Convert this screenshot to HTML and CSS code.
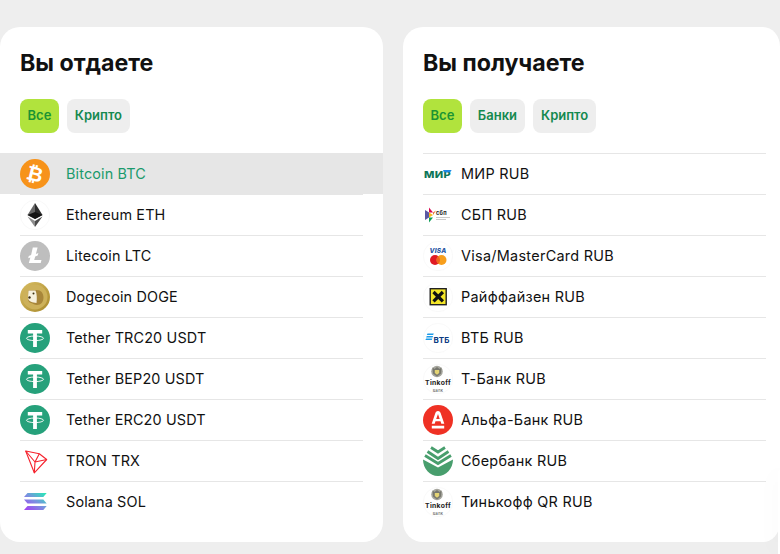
FILE: index.html
```html
<!DOCTYPE html>
<html lang="ru">
<head>
<meta charset="utf-8">
<title>Обмен</title>
<link rel="stylesheet" href="styles.css">
</head>
<body>
<main class="page">
  <section class="card">
    <h2 class="title">Вы отдаете</h2>
    <div class="tabs">
      <span class="tab tab-active">Все</span>
      <span class="tab">Крипто</span>
    </div>
    <ul class="list">
      <li class="row row-active">
        <svg class="icon" viewBox="0 0 30 30"><circle cx="15" cy="15" r="15" fill="#f7931a"/><text x="15" y="22" class="btc" transform="rotate(14 15 15)">₿</text></svg>
        <span class="name">Bitcoin BTC</span>
      </li>
      <li class="row">
        <svg class="icon" viewBox="0 0 30 30"><circle cx="15" cy="15" r="14.7" fill="#fff" stroke="#f4f4f4" stroke-width=".6"/><path d="M15 3l-7.500 12 7.500 4z" fill="#666"/><path d="M15 3l7.500 12-7.500 4z" fill="#2b2b2b"/><path d="M7.500 15l7.500-3 7.500 3-7.500 4z" fill="#141414"/><path d="M7.500 16.500L15 27v-6z" fill="#8d8d8d"/><path d="M22.500 16.500L15 27v-6z" fill="#4a4a4a"/></svg>
        <span class="name">Ethereum ETH</span>
      </li>
      <li class="row">
        <svg class="icon" viewBox="0 0 30 30"><circle cx="15" cy="15" r="15" fill="#bebebe"/><path d="M12.800 6.500h4.800l-1.700 6.400 2.500-1-.7 2.500-2.500 1-1 3.500h7.300l-.8 3.100H8.800l1.600-5.600-2.200.9.600-2.300 2.300-.9z" fill="#fff"/></svg>
        <span class="name">Litecoin LTC</span>
      </li>
      <li class="row">
        <svg class="icon" viewBox="0 0 30 30"><defs><linearGradient id="doge" x1="0" y1="0" x2="1" y2="1"><stop offset="0" stop-color="#d8bd62"/><stop offset="1" stop-color="#a98a2c"/></linearGradient></defs><circle cx="15" cy="15" r="15" fill="url(#doge)"/><circle cx="15" cy="15" r="12.500" fill="#cdb15a"/><path d="M8.500 8h8c4.500 0 7 3 7 7.500S21 23 17 23c-2.500 0-4-1.500-6-2-2-.6-3-2-3-4.500z" fill="#a8863a"/><path d="M8.500 8.500h7c1.500 3 1.500 8.500 1 12.500-2-.3-4-.5-5.500-1.200C9 19 8 17.500 8 15.500z" fill="#f7f1de"/><circle cx="13.500" cy="11.500" r="1" fill="#3c2f10"/><circle cx="9.500" cy="15.500" r="1.200" fill="#3c2f10"/></svg>
        <span class="name">Dogecoin DOGE</span>
      </li>
      <li class="row">
        <svg class="icon" viewBox="0 0 30 30"><use href="#usdt"/></svg>
        <span class="name">Tether TRC20 USDT</span>
      </li>
      <li class="row">
        <svg class="icon" viewBox="0 0 30 30"><use href="#usdt"/></svg>
        <span class="name">Tether BEP20 USDT</span>
      </li>
      <li class="row">
        <svg class="icon" viewBox="0 0 30 30"><use href="#usdt"/></svg>
        <span class="name">Tether ERC20 USDT</span>
      </li>
      <li class="row">
        <svg class="icon" viewBox="0 0 30 30"><g fill="none" stroke="#f5222d" stroke-width="1.100" stroke-linejoin="round"><path d="M5.700 5l13.600 2.700 7.400 5.800-12.400 13.300z"/><path d="M5.700 5l9.300 11-.7 10.800M15 16l11.700-2.500M15 16l4.300-8.300"/></g></svg>
        <span class="name">TRON TRX</span>
      </li>
      <li class="row">
        <svg class="icon" viewBox="0 0 30 30"><defs><linearGradient id="sol" x1="0" y1="1" x2="1" y2="0"><stop offset="0" stop-color="#a63cf2"/><stop offset=".5" stop-color="#7a8fe0"/><stop offset="1" stop-color="#22efb4"/></linearGradient></defs><path d="M7.500 6h19.200l-3.400 4H4zM4 12.500h19.300l3.400 4H7.500zM7.500 19h19.200l-3.400 4H4z" fill="url(#sol)"/></svg>
        <span class="name">Solana SOL</span>
      </li>
    </ul>
  </section>

  <section class="card card-cut">
    <h2 class="title">Вы получаете</h2>
    <div class="tabs">
      <span class="tab tab-active">Все</span>
      <span class="tab">Банки</span>
      <span class="tab">Крипто</span>
    </div>
    <ul class="list list-banks">
      <li class="row">
        <svg class="icon" viewBox="0 0 30 30"><text x="1" y="18.500" class="mir" textLength="27" lengthAdjust="spacingAndGlyphs">МИР</text><path d="M20 11h8.500c-.2 1.400-1.500 2.300-3 2.300H21z" fill="#1e88e5"/></svg>
        <span class="name">МИР RUB</span>
      </li>
      <li class="row">
        <svg class="icon" viewBox="0 0 30 30"><path d="M2 10l4 2.500v5L2 20z" fill="#5b57a2"/><path d="M6 7.500l4 5H6z" fill="#d90751"/><path d="M6 12.500l4 2.500-4 2.500z" fill="#fab718"/><path d="M6 17.500h4l-4 5z" fill="#0f9d58"/><path d="M10 12.500l3-2-3 4.500z" fill="#ed6f26"/><text x="13" y="14.500" class="sbp">сбп</text><path d="M13 17h14v.8H13zM13 19h10v.8H13z" fill="#bbb"/></svg>
        <span class="name">СБП RUB</span>
      </li>
      <li class="row">
        <svg class="icon" viewBox="0 0 30 30"><circle cx="15" cy="15" r="14.700" fill="#fff" stroke="#f5f5f5" stroke-width=".6"/><text x="15" y="12" class="visa">VISA</text><circle cx="12" cy="19" r="5" fill="#e01b24"/><circle cx="18.500" cy="19" r="5" fill="#f79e1b"/><path d="M15.250 15.200a5 5 0 0 1 0 7.600a5 5 0 0 1 0-7.600z" fill="#f0641e"/></svg>
        <span class="name">Visa/MasterCard RUB</span>
      </li>
      <li class="row">
        <svg class="icon" viewBox="0 0 30 30"><circle cx="15" cy="15" r="14.700" fill="#fff" stroke="#f5f5f5" stroke-width=".6"/><rect x="7.200" y="6.700" width="16" height="16" fill="#f4e628" stroke="#222" stroke-width="1.400"/><path d="M10.500 10l9.400 9.400M19.900 10l-9.400 9.400" stroke="#111" stroke-width="3.200"/></svg>
        <span class="name">Райффайзен RUB</span>
      </li>
      <li class="row">
        <svg class="icon" viewBox="0 0 30 30"><circle cx="15" cy="15" r="14.700" fill="#fff" stroke="#f5f5f5" stroke-width=".6"/><path d="M4.500 10.500h6.300l-.7 1.500H3.800zM3.800 13h6.300l-.7 1.500H3.100zM3.100 15.500h6.300l-.7 1.500H2.400z" fill="#1e9be8"/><text x="10.500" y="19.500" class="vtb">ВТБ</text></svg>
        <span class="name">ВТБ RUB</span>
      </li>
      <li class="row">
        <svg class="icon" viewBox="0 0 30 30"><use href="#tinkoff"/></svg>
        <span class="name">Т-Банк RUB</span>
      </li>
      <li class="row">
        <svg class="icon" viewBox="0 0 30 30"><circle cx="15" cy="15" r="15" fill="#ef3124"/><path d="M15 6c1.600 0 2.300 1 2.800 2.400L21.300 18.700h-3l-.8-2.400h-5l-.8 2.400H8.700l3.500-10.300C12.700 7 13.400 6 15 6zm0 3l-1.800 5h3.500zM8.800 20.800h12.400v2.600H8.800z" fill="#fff"/></svg>
        <span class="name">Альфа-Банк RUB</span>
      </li>
      <li class="row">
        <svg class="icon" viewBox="0 0 30 30"><path d="M0 13.500l15 8 15-8C30 22.500 23 30 15 30S0 22.500 0 13.500z" fill="#489e6d"/><path d="M2 9.500l13 8 13-8M4.500 5.500L15 12.500l10.500-7M8 1.500l7 4.500 7-4.500" fill="none" stroke="#489e6d" stroke-width="2.800"/></svg>
        <span class="name">Сбербанк RUB</span>
      </li>
      <li class="row">
        <svg class="icon" viewBox="0 0 30 30"><use href="#tinkoff"/></svg>
        <span class="name">Тинькофф QR RUB</span>
      </li>
    </ul>
  </section>
</main>

<aside class="widget"></aside>

<svg class="defs" aria-hidden="true">
  <defs>
    <g id="usdt">
      <circle cx="15" cy="15" r="15" fill="#26a17b"/>
      <ellipse cx="15" cy="15.300" rx="8.500" ry="2.300" fill="none" stroke="#fff" stroke-width=".9"/>
      <path d="M7.800 7h14.400v3.600h-5.300V24h-3.800V10.600H7.800z" fill="#fff"/>
    </g>
    <g id="tinkoff">
      <circle cx="15" cy="15" r="14.700" fill="#fff" stroke="#f5f5f5" stroke-width=".6"/>
      <circle cx="14" cy="7.500" r="5.800" fill="#a6a69e"/>
      <path d="M9.500 3.500l2 1.500 2.500-2 2.500 2 2-1.500-.5 6-4 3-4-3z" fill="#77776e"/>
      <path d="M11.800 6h4.400v3l-2.200 1.800L11.800 9z" fill="#e4d474"/>
      <text x="15" y="21" class="tk">Tinkoff</text>
      <text x="15" y="27.500" class="tk-sub">Bank</text>
    </g>
  </defs>
</svg>
</body>
</html>
```
FILE: styles.css
```css
* { box-sizing: border-box; }

html, body {
  margin: 0;
  height: 554px;
  overflow: hidden;
  background: #eeeeee;
}

body { font-family: "Inter", "Liberation Sans", sans-serif; }

.page {
  display: flex;
  gap: 20px;
  width: 780px;
  padding-top: 27px;
}

.card {
  flex: 0 0 383px;
  height: 515px;
  background: #fff;
  border-radius: 20px;
}

/* the second card is cut off by the right edge of the window */
.card-cut {
  flex: 0 0 377px;
  border-radius: 20px 17px 17px 20px / 20px 20px 20px 20px;
}

.title {
  margin: 0;
  padding: 22px 20px 0;
  height: 72px;
  font-size: 23.200px;
  line-height: 28px;
  font-weight: 700;
  color: #111;
}

.tabs {
  display: flex;
  gap: 8px;
  padding: 0 20px;
  height: 54px;
}

.tab {
  display: flex;
  align-items: center;
  height: 34px;
  padding: 0 8px 2px;
  border-radius: 8px;
  background: #eeeeee;
  font-size: 13px;
  font-weight: 600;
  color: #14894f;
}

.tab-active {
  padding: 0 7.500px 2px;
  background: #b1e33d;
  color: #1c9433;
}

.list {
  list-style: none;
  margin: 0;
  padding: 0 20px;
}

.list-banks { padding-right: 14px; }

.row {
  display: flex;
  align-items: center;
  gap: 16px;
  height: 41px;
  border-top: 1px solid #e6e6e6;
  font-size: 14.400px;
  letter-spacing: .15px;
  color: #111;
}

.list-banks .row { gap: 8px; letter-spacing: .3px; }

.name { margin-top: -2px; }

.row-active {
  margin: 0 -20px;
  padding: 0 20px;
  background: #e6e6e6;
  color: #1a9a6c;
}

.icon { flex: none; width: 30px; height: 30px; }

.widget {
  position: absolute;
  right: 0;
  bottom: 0;
  width: 2px;
  height: 84px;
  border-top-left-radius: 2px;
  background: #fff;
  box-shadow: 0 0 22px rgba(0, 0, 0, .12);
}

.defs { position: absolute; width: 0; height: 0; }

.btc { font: 700 20px "DejaVu Sans", sans-serif; fill: #fff; text-anchor: middle; }
.mir { font: 800 9.500px "Inter", sans-serif; fill: #0f7558; }
.sbp { font: 700 5.500px "Inter", sans-serif; fill: #222; }
.visa { font: italic 800 6.500px "Inter", sans-serif; fill: #24559f; text-anchor: middle; }
.vtb { font: 700 8px "Inter", sans-serif; fill: #0a3a82; }
.tk { font: 700 6.800px "Inter", sans-serif; fill: #222; text-anchor: middle; }
.tk-sub { font: 400 4px "Inter", sans-serif; fill: #444; text-anchor: middle; }
```
